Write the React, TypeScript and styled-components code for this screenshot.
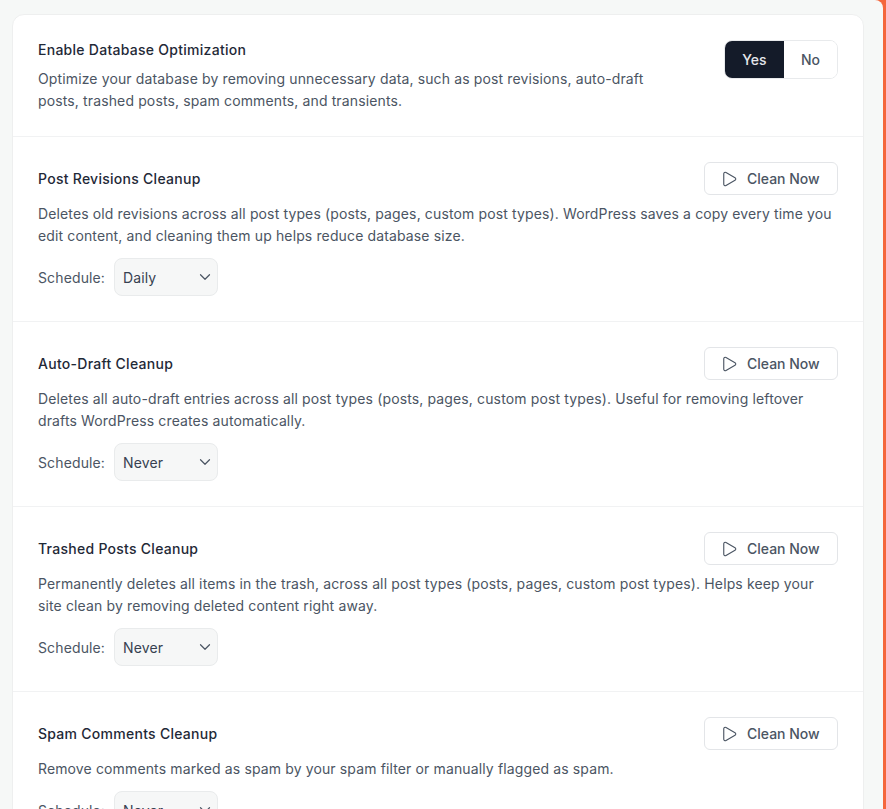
import React from 'react';
import styled, {createGlobalStyle} from 'styled-components';
import {ChevronDown, Play} from 'lucide-react';

const GlobalStyle = createGlobalStyle`
  html, body {
    margin: 0;
    padding: 0;
    height: 100%;
    overflow: hidden;
    background: #f4663c;
  }
  * {
    box-sizing: border-box;
  }
`;

const Panel = styled.div`
  width: 883px;
  height: 809px;
  overflow: hidden;
  padding: 14px 19px 0 12px;
  background: #f6f8f7;
  border-top-right-radius: 8px;
  font-family: Inter, "Liberation Sans", sans-serif;
  font-size: 14px;
  color: #4b5563;
`;

const Card = styled.div`
  background: white;
  border: 1px solid #eeefef;
  border-radius: 12px;
`;

const Section = styled.section`
  padding: 25px 25px 25px;
  border-bottom: 1px solid #f1f2f3;

  &:first-child {
    padding-bottom: 24px;
  }

  &:last-child {
    border-bottom: none;
  }
`;

const Row = styled.div`
  display: flex;
  justify-content: space-between;
  align-items: center;
`;

const TopRow = styled(Row)`
  align-items: flex-start;
`;

const Title = styled.h3`
  margin: 0;
  font-size: 14px;
  line-height: 20px;
  font-weight: 500;
  letter-spacing: 0.27px;
  color: #1f2937;
`;

const Description = styled.p<{$narrow?: boolean}>`
  margin: 8px 0 0;
  line-height: 22px;
  letter-spacing: 0.13px;
  max-width: ${p => (p.$narrow ? '625px' : 'none')};
`;

const Toggle = styled.div`
  display: flex;
  width: 114px;
  height: 39px;
  border: 1px solid #e8eaec;
  border-radius: 8px;
  overflow: hidden;
`;

const ToggleOption = styled.div<{$active?: boolean}>`
  display: flex;
  align-items: center;
  justify-content: center;
  flex: ${p => (p.$active ? '0 0 59px' : '1')};
  font-weight: 500;
  background: ${p => (p.$active ? '#141b29' : 'white')};
  color: ${p => (p.$active ? '#e5e7eb' : '#4b5563')};
`;

const CleanButton = styled.button`
  display: flex;
  align-items: center;
  gap: 9px;
  width: 134px;
  height: 33px;
  padding: 0 0 0 15px;
  border: 1px solid #e3e5e8;
  border-radius: 6px;
  background: white;
  color: #4b5563;
  font-family: inherit;
  font-size: 14px;
  font-weight: 500;
`;

const ScheduleRow = styled.div`
  display: flex;
  align-items: center;
  gap: 9px;
  margin-top: 11px;
  letter-spacing: 0.13px;
`;

const Select = styled.div`
  display: flex;
  align-items: center;
  justify-content: space-between;
  width: 104px;
  height: 38px;
  padding: 0 3px 0 8px;
  border: 1px solid #e9ebec;
  border-radius: 8px;
  background: #f6f7f7;
  color: #374151;
`;

const cleanups = [
  {
    title: 'Post Revisions Cleanup',
    text: 'Deletes old revisions across all post types (posts, pages, custom post types). WordPress saves a copy every time you edit content, and cleaning them up helps reduce database size.',
    schedule: 'Daily',
  },
  {
    title: 'Auto-Draft Cleanup',
    text: 'Deletes all auto-draft entries across all post types (posts, pages, custom post types). Useful for removing leftover drafts WordPress creates automatically.',
    schedule: 'Never',
  },
  {
    title: 'Trashed Posts Cleanup',
    text: 'Permanently deletes all items in the trash, across all post types (posts, pages, custom post types). Helps keep your site clean by removing deleted content right away.',
    schedule: 'Never',
  },
  {
    title: 'Spam Comments Cleanup',
    text: 'Remove comments marked as spam by your spam filter or manually flagged as spam.',
    schedule: 'Never',
  },
];

function App() {
  return (
    <Panel>
      <GlobalStyle/>
      <Card>
        <Section>
          <TopRow>
            <div>
              <Title>Enable Database Optimization</Title>
              <Description $narrow>
                Optimize your database by removing unnecessary data, such as post revisions, auto-draft posts, trashed posts, spam comments, and transients.
              </Description>
            </div>
            <Toggle>
              <ToggleOption $active>Yes</ToggleOption>
              <ToggleOption>No</ToggleOption>
            </Toggle>
          </TopRow>
        </Section>
        {cleanups.map(item =>
          <Section key={item.title}>
            <Row>
              <Title>{item.title}</Title>
              <CleanButton>
                <Play size={18} strokeWidth={1.5}/>
                Clean Now
              </CleanButton>
            </Row>
            <Description>{item.text}</Description>
            <ScheduleRow>
              Schedule:
              <Select>
                {item.schedule}
                <ChevronDown size={18} strokeWidth={1.6} color="#4b5563"/>
              </Select>
            </ScheduleRow>
          </Section>
        )}
      </Card>
    </Panel>
  );
}

export default App;
